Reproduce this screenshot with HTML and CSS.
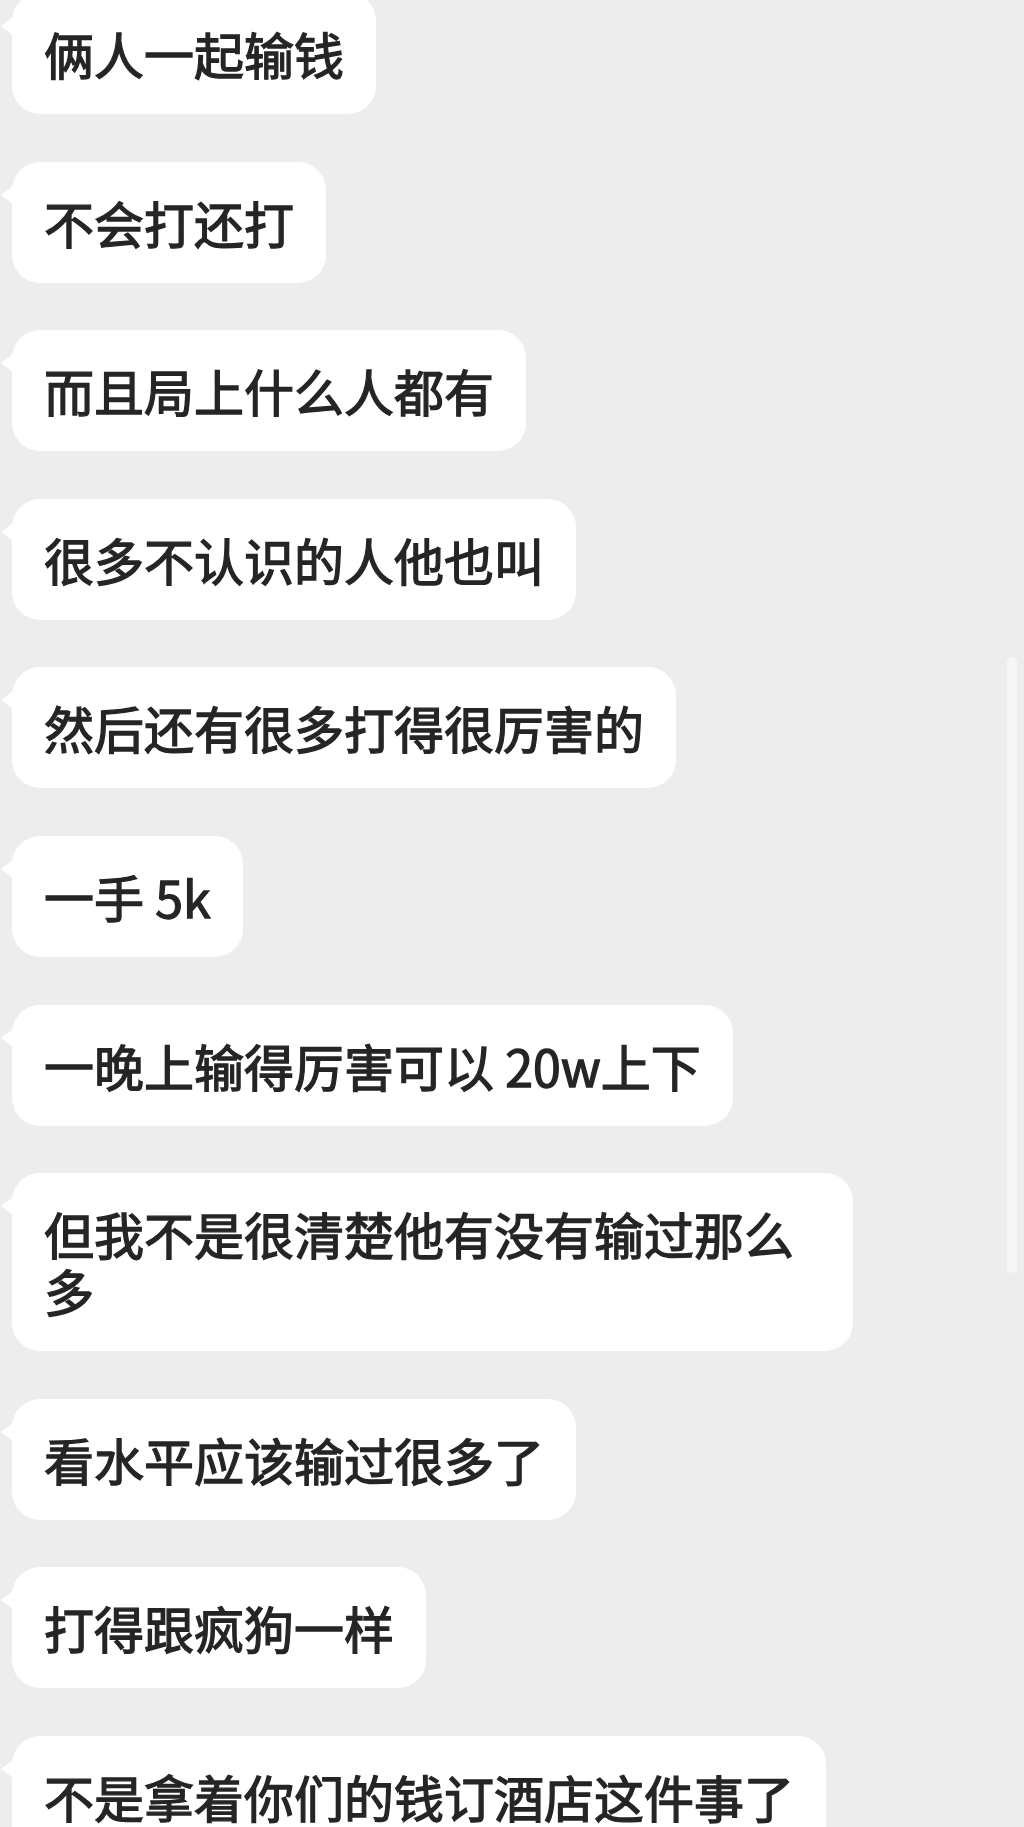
FILE: index.html
```html
<!DOCTYPE html>
<html>
<head>
    <meta charset="utf-8">
    <title>聊天记录</title>
    <link rel="stylesheet" href="styles.css">
</head>
<body>
    <div class="chat">
        <div class="msg"><div class="bubble">俩人一起输钱</div></div>
        <div class="msg"><div class="bubble">不会打还打</div></div>
        <div class="msg"><div class="bubble">而且局上什么人都有</div></div>
        <div class="msg"><div class="bubble">很多不认识的人他也叫</div></div>
        <div class="msg"><div class="bubble">然后还有很多打得很厉害的</div></div>
        <div class="msg"><div class="bubble">一手 5k</div></div>
        <div class="msg"><div class="bubble">一晚上输得厉害可以 20w上下</div></div>
        <div class="msg"><div class="bubble">但我不是很清楚他有没有输过那么多</div></div>
        <div class="msg"><div class="bubble">看水平应该输过很多了</div></div>
        <div class="msg"><div class="bubble">打得跟疯狗一样</div></div>
        <div class="msg"><div class="bubble">不是拿着你们的钱订酒店这件事了</div></div>
    </div>
    <div class="scrollbar"></div>
</body>
</html>
```

FILE: styles.css
```css
html,
body {
    margin: 0;
    padding: 0;
    background: #ededed;
    height: 100%;
    overflow: hidden;
}

.chat {
    display: flex;
    flex-direction: column;
    gap: 47.6px;
    padding: 0 0 0 12px;
    margin-top: -7px;
}

.msg {
    display: flex;
}

.bubble {
    position: relative;
    box-sizing: border-box;
    max-width: 841px;
    padding: 32px 32px;
    background: #fff;
    border-radius: 28px;
    color: #252525;
    font-family: "Noto Sans CJK SC", "Noto Sans", sans-serif;
    font-weight: 400;
    -webkit-text-stroke: 1.3px #252525;
    font-size: 50px;
    line-height: 57px;
}

/* little tail on the left */
.bubble::before {
    content: "";
    position: absolute;
    left: -11px;
    top: 24px;
    border-top: 9px solid transparent;
    border-bottom: 9px solid transparent;
    border-right: 12px solid #fff;
}

.scrollbar {
    position: absolute;
    top: 657px;
    left: 1007px;
    width: 10px;
    height: 616px;
    border-radius: 5px;
    background: #f7f7f7;
}
```
